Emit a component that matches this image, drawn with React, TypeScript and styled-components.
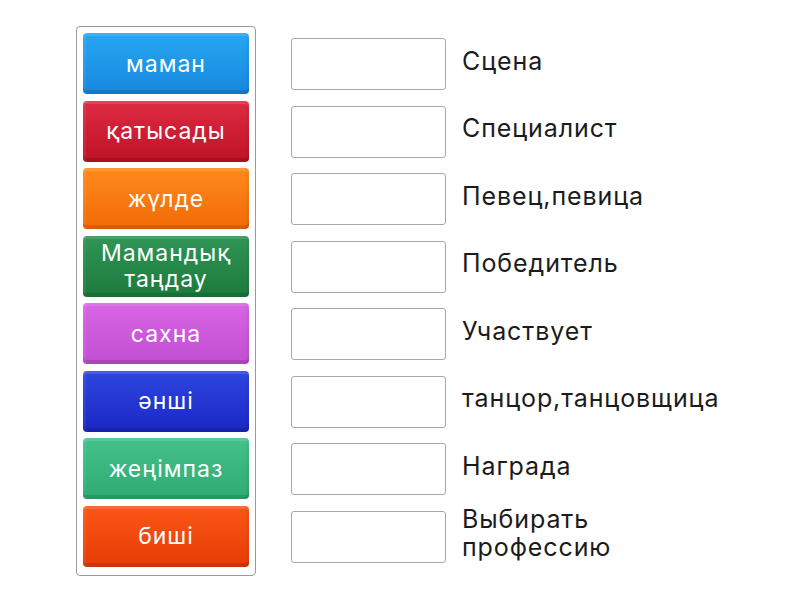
import React from "react";
import styled, { createGlobalStyle } from "styled-components";

const GlobalStyle = createGlobalStyle`
  html, body {
    margin: 0;
    padding: 0;
    background: #ffffff;
  }
  body {
    font-family: Inter, "Noto Sans", "DejaVu Sans", sans-serif;
  }
`;

const tiles = [
  { label: "маман", top: "#27a6f2", bottom: "#1787df" },
  { label: "қатысады", top: "#dd2b43", bottom: "#bf1226" },
  { label: "жүлде", top: "#ff8a1c", bottom: "#f26a06" },
  { label: "Мамандық таңдау", top: "#2f9555", bottom: "#1c7a3c" },
  { label: "сахна", top: "#d865e4", bottom: "#c24fd2" },
  { label: "әнші", top: "#2f46e0", bottom: "#1a27c4" },
  { label: "жеңімпаз", top: "#45c28c", bottom: "#2eaa72" },
  { label: "биші", top: "#fb5616", bottom: "#e63c06" },
];

const answers = [
  "Сцена",
  "Специалист",
  "Певец,певица",
  "Победитель",
  "Участвует",
  "танцор,танцовщица",
  "Награда",
  "Выбирать профессию",
];

const App = () => {
  return (
    <Page>
      <GlobalStyle />
      <Panel>
        {tiles.map((t) => (
          <Tile key={t.label} $top={t.top} $bottom={t.bottom}>
            {t.label}
          </Tile>
        ))}
      </Panel>
      <Targets>
        {answers.map((a) => (
          <Row key={a}>
            <Slot />
            <Label>{a}</Label>
          </Row>
        ))}
      </Targets>
    </Page>
  );
};
export default App;

const Page = styled.div`
  display: flex;
  align-items: flex-start;
  padding: 26px 0 0 76px;
  width: 800px;
  height: 600px;
  box-sizing: border-box;
`;

const Panel = styled.div`
  width: 180px;
  box-sizing: border-box;
  border: 1px solid #9a9a9a;
  border-radius: 4px;
  padding: 6px 6px 8px 6px;
  display: flex;
  flex-direction: column;
  gap: 6.5px;
`;

const Tile = styled.div<{ $top: string; $bottom: string }>`
  height: 61px;
  border-radius: 4px;
  background: linear-gradient(${(p) => p.$top}, ${(p) => p.$bottom});
  box-shadow: inset 0 -4px 0 rgba(0, 0, 0, 0.12), inset 0 3px 0 rgba(255, 255, 255, 0.12),
    inset 3px 0 0 rgba(255, 255, 255, 0.06), inset -3px 0 0 rgba(0, 0, 0, 0.04);
  color: #ffffff;
  font-size: 23px;
  letter-spacing: 1px;
  line-height: 26px;
  display: flex;
  align-items: center;
  justify-content: center;
  text-align: center;
  padding: 0 8px;
`;

const Targets = styled.div`
  margin-left: 35px;
  padding-top: 12px;
  display: flex;
  flex-direction: column;
  gap: 15.5px;
`;

const Row = styled.div`
  display: flex;
  align-items: center;
  height: 52px;
`;

const Slot = styled.div`
  width: 155px;
  height: 52px;
  box-sizing: border-box;
  border: 1px solid #a8a8a8;
  border-radius: 3px;
  flex-shrink: 0;
`;

const Label = styled.div`
  margin-left: 16px;
  width: 270px;
  font-size: 25px;
  letter-spacing: 0.9px;
  line-height: 28px;
  color: #1b1b1b;
  margin-top: -7px;
`;
